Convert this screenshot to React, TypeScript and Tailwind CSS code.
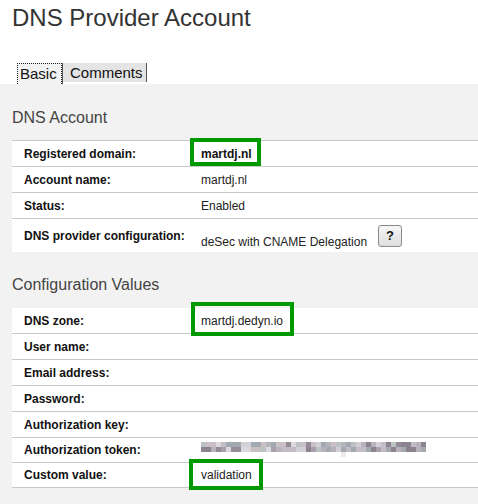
import React from "react";

interface Row {
  label: string;
  value?: React.ReactNode;
  h: string;
}

const font = { fontFamily: '"Liberation Sans", Arial, sans-serif' };

// pixelated stand-in for the blurred token
function BlurredToken() {
  const cols = 45;
  const rows = 2;
  const shades = ["#c2bcc6", "#a8a1ad", "#d3cfd6", "#958b99", "#b7b3bb", "#c9c0c6", "#a3a9b0", "#dcd9de", "#8c8390", "#bcc2c2"];
  const cells: React.ReactNode[] = [];
  let seed = 7;
  for (let r = 0; r < rows; r++) {
    for (let c = 0; c < cols; c++) {
      seed = (seed * 1103515245 + 12345) % 2147483648;
      const fill = shades[(seed >> 8) % shades.length];
      cells.push(<rect key={`${r}-${c}`} x={c * 5} y={r * 5} width={5} height={5} fill={fill} />);
    }
  }
  return (
    <svg width={225} height={16} viewBox="0 0 225 16" className="block">
      {cells}
      <rect x={140} y={10} width={5} height={5} fill="#eceaec" />
    </svg>
  );
}

function Table({ rows, topBorders }: { rows: Row[]; topBorders: boolean }) {
  return (
    <div className="ml-3 bg-white">
      {rows.map((r) => (
        <div
          key={r.label}
          className={`flex items-center border-[#c8c8c8] ${r.h} ${topBorders ? "border-t" : "border-b"}`}
        >
          <div className="w-[177px] shrink-0 pl-3 text-[12px] font-bold text-[#111]">{r.label}</div>
          <div className="flex items-center pl-3 text-[12px] text-[#222]">{r.value}</div>
        </div>
      ))}
    </div>
  );
}

export default function App() {
  const account: Row[] = [
    { label: "Registered domain:", value: <span className="font-bold text-[#111]">martdj.nl</span>, h: "h-[26px]" },
    { label: "Account name:", value: "martdj.nl", h: "h-[26px]" },
    { label: "Status:", value: "Enabled", h: "h-[26px]" },
    {
      label: "DNS provider configuration:",
      value: (
        <>
          <span className="pt-3">deSec with CNAME Delegation</span>
          <button className="ml-[11px] flex h-[22px] w-[24px] items-center justify-center rounded-[3px] border border-[#8a8a8a] bg-gradient-to-b from-[#f6f6f6] to-[#dedede] text-[13px] font-bold text-[#111]">
            ?
          </button>
        </>
      ),
      h: "h-[34px]",
    },
  ];

  const config: Row[] = [
    { label: "DNS zone:", value: "martdj.dedyn.io", h: "h-[26px]" },
    { label: "User name:", h: "h-[26px]" },
    { label: "Email address:", h: "h-[26px]" },
    { label: "Password:", h: "h-[26px]" },
    { label: "Authorization key:", h: "h-[26px]" },
    { label: "Authorization token:", value: <BlurredToken />, h: "h-[25px]" },
    { label: "Custom value:", value: "validation", h: "h-[25px]" },
  ];

  return (
    <div className="relative min-h-[504px] w-[478px] overflow-hidden bg-white" style={font}>
      <h1 className="h-[28px] pl-3 pt-0 mt-[4px] text-[24px] leading-[28px] font-normal text-[#333]">
        DNS Provider Account
      </h1>

      <div className="mt-[31px] flex h-[21px] pl-[17px] text-[15px] leading-[21px] text-[#111]">
        <div className="w-[45px] border border-dotted border-[#222] border-b-0 bg-[#f2f2f2] pl-[2px] leading-[20px]">
          Basic
        </div>
        <div className="w-px bg-[#555]" />
        <div className="mb-[2px] w-[84px] border-r border-[#555] bg-[#e4e4e4] pl-[7px] leading-[19px]">
          Comments
        </div>
      </div>

      <div className="bg-[#f2f2f2] pt-[25px] pb-[20px]">
        <h2 className="h-[18px] pl-3 text-[16px] leading-[18px] font-normal text-[#444]">DNS Account</h2>
        <div className="mt-[13px]">
          <Table rows={account} topBorders />
        </div>

        <h2 className="mt-[24px] h-[18px] pl-3 text-[16px] leading-[18px] font-normal text-[#444]">
          Configuration Values
        </h2>
        <div className="mt-[14px]">
          <Table rows={config} topBorders={false} />
        </div>
      </div>

      {/* green annotation boxes */}
      <div className="absolute left-[190px] top-[138px] h-[28px] w-[71px] border-4 border-[#009a00]" />
      <div className="absolute left-[191px] top-[302px] h-[34px] w-[103px] border-4 border-[#009a00]" />
      <div className="absolute left-[189px] top-[459px] h-[31px] w-[74px] border-4 border-[#009a00]" />
    </div>
  );
}
